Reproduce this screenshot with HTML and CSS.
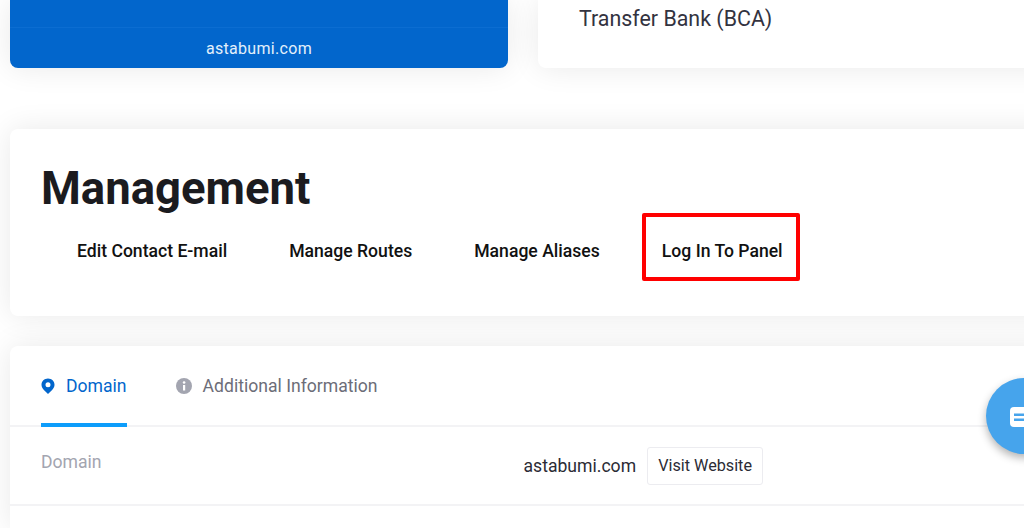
FILE: index.html
```html
<!DOCTYPE html>
<html lang="en">
<head>
  <meta charset="UTF-8">
  <meta name="viewport" content="width=device-width, initial-scale=1.0">
  <title>Management</title>
  <link rel="stylesheet" href="styles.css">
</head>
<body>
  <div class="page">
    <div class="topRow">
      <div class="domainCard">
        <div class="domainCard_name">astabumi.com</div>
      </div>
      <div class="paymentCard">Transfer Bank (BCA)</div>
    </div>
    <section class="card management">
      <h1>Management</h1>
      <nav class="manageNav">
        <a href="#" class="manageNav_item">Edit Contact E-mail</a>
        <a href="#" class="manageNav_item">Manage Routes</a>
        <a href="#" class="manageNav_item">Manage Aliases</a>
        <a href="#" class="manageNav_item is-marked">Log In To Panel</a>
      </nav>
    </section>
    <section class="card details">
      <div class="tabs">
        <a href="#" class="tab is-active">
          <svg class="tab_icon" viewBox="0 0 14 16" width="14" height="16"><path fill="currentColor" fill-rule="evenodd" d="M7 0.5C3.3 0.5 0.5 3.3 0.5 6.8c0 2.1 1 3.7 2.4 5.2L7 16l4.1-4c1.4-1.5 2.4-3.1 2.4-5.2C13.500 3.300 10.700 0.500 7 0.500zM7 4.300a2.500 2.500 0 1 1 0 5 2.500 2.500 0 0 1 0-5z"/></svg>
          Domain
        </a>
        <a href="#" class="tab">
          <svg class="tab_icon" viewBox="0 0 16 16" width="16" height="16"><circle cx="8" cy="8" r="8" fill="#a3a5b0"/><rect x="7" y="7" width="2.200" height="5.500" fill="#fff"/><circle cx="8.100" cy="4.500" r="1.300" fill="#fff"/></svg>
          Additional Information
        </a>
      </div>
      <div class="detailRow">
        <div class="detailRow_label">Domain</div>
        <div class="detailRow_value">
          astabumi.com
          <a href="#" class="visitButton">Visit Website</a>
        </div>
      </div>
    </section>
  </div>
  <button class="chatButton" aria-label="Chat">
    <svg class="chatButton_icon" viewBox="0 0 28 20" width="28" height="20"><rect width="28" height="20" rx="4" fill="#fff"/><rect x="4" y="6.500" width="24" height="2.500" fill="#46a4ec"/><rect x="4" y="11.500" width="24" height="2.500" fill="#46a4ec"/></svg>
  </button>
</body>
</html>
```

FILE: styles.css
```css
* {
  margin: 0;
  padding: 0;
  box-sizing: border-box;
}
html, body {
  height: 528px;
  overflow: hidden;
}
body {
  font-family: Roboto, "Liberation Sans", sans-serif;
  font-size: 17.6px;
  color: #1e1e2d;
  background-color: #fff;
}
a {
  text-decoration: none;
  color: inherit;
}
.page {
  width: 1060px;
  padding-left: 10px;
}
.topRow {
  display: flex;
  gap: 30px;
  height: 68px;
  margin-bottom: 61px;
}
.domainCard {
  width: 498px;
  background-color: #0266cc;
  border-radius: 0 0 8px 8px;
  box-shadow: 0 0 30px rgba(0, 0, 0, 0.09);
  padding-top: 27px;
}
.domainCard_name {
  height: 41px;
  border-top: 1px solid #0b6dd1;
  color: #e3f0fb;
  font-size: 16px;
  line-height: 42px;
  text-align: center;
  letter-spacing: 0.02em;
}
.paymentCard {
  flex: 1;
  background-color: #fff;
  border-radius: 0 0 8px 8px;
  box-shadow: 0 0 30px rgba(0, 0, 0, 0.09);
  padding-left: 41px;
  font-size: 21.4px;
  line-height: 38px;
  color: #33333f;
}
.card {
  background-color: #fff;
  border-radius: 8px;
  box-shadow: 0 0 30px rgba(0, 0, 0, 0.09);
}
.management {
  height: 187px;
  padding: 32px 31px 0;
  margin-bottom: 30px;
}
h1 {
  font-size: 45.5px;
  line-height: 56px;
  font-weight: 700;
  color: #1b1b1f;
}
.manageNav {
  display: flex;
  margin-top: -4px;
  padding-left: 16px;
  gap: 25px;
}
.manageNav_item {
  padding: 21px 13px 13px 16px;
  font-size: 17.6px;
  line-height: 26px;
  font-weight: 500;
  color: #111;
  border: 4px solid transparent;
  border-radius: 2px;
}
.manageNav_item.is-marked {
  border-color: #f00;
}
.details {
  height: 182px;
  border-radius: 8px 8px 0 0;
}
.tabs {
  display: flex;
  gap: 49px;
  height: 81px;
  padding-left: 31px;
  border-bottom: 2px solid #f3f3f5;
}
.tab {
  display: flex;
  align-items: center;
  gap: 11px;
  height: 81px;
  padding-bottom: 1px;
  color: #6c6d78;
}
.tab.is-active {
  color: #0266cc;
  border-bottom: 4px solid #0d9dfb;
  padding-top: 3px;
}
.detailRow {
  display: flex;
  align-items: center;
  height: 79px;
  padding-left: 31px;
  border-bottom: 2px solid #f3f3f5;
}
.detailRow_label {
  width: 482.5px;
  color: #a3a5b0;
  margin-top: -8px;
}
.detailRow_value {
  display: flex;
  align-items: center;
  gap: 11px;
  color: #2b2b35;
}
.visitButton {
  width: 116px;
  height: 38px;
  border: 1px solid #ececf0;
  border-radius: 3px;
  font-size: 16.2px;
  line-height: 36px;
  text-align: center;
}
.chatButton {
  position: absolute;
  top: 378px;
  left: 986px;
  width: 76px;
  height: 76px;
  border: none;
  border-radius: 50%;
  background-color: #46a4ec;
  box-shadow: 0 4px 8px rgba(0, 0, 0, 0.3);
  display: flex;
  align-items: center;
  justify-content: center;
}
.chatButton_icon {
  margin-top: 2px;
}
```
